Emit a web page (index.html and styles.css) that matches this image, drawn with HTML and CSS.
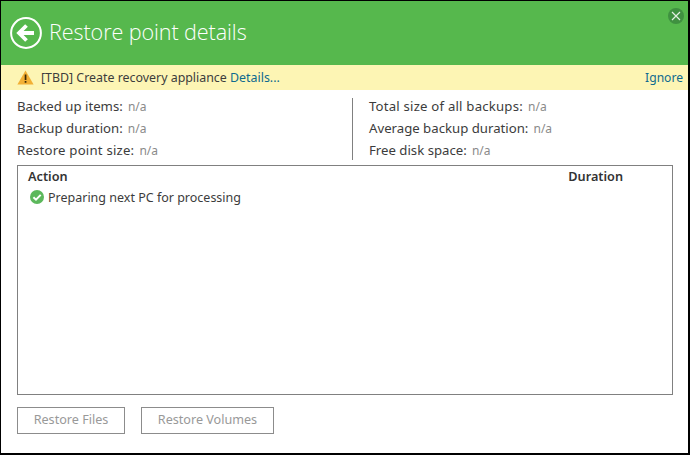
FILE: index.html
```html
<!DOCTYPE html>
<html lang="en">
<head>
<meta charset="utf-8">
<title>Restore point details</title>
<link rel="stylesheet" href="styles.css">
</head>
<body>
<div class="window">
  <header class="header">
    <svg class="back" width="32" height="32" viewBox="0 0 32 32" aria-hidden="true">
      <circle cx="16" cy="16" r="14.9" fill="none" stroke="#fff" stroke-width="2"/>
      <path d="M16.5 8.5 9 16l7.5 7.5M9.5 16h14.5" fill="none" stroke="#fff" stroke-width="3.8"/>
    </svg>
    <h1 class="title">Restore point details</h1>
    <span class="close">
      <svg width="10" height="10" viewBox="0 0 10 10" aria-hidden="true"><path d="M1 1l8 8M9 1l-8 8" stroke="#fff" stroke-width="1.2" opacity=".85"/></svg>
    </span>
  </header>
  <div class="notice">
    <svg class="warn" width="17" height="15" viewBox="0 0 17 15" aria-hidden="true">
      <path d="M8.5 .5 16.6 14.5H.4Z" fill="#f2b035"/>
      <path d="M7.7 4.5h1.7v5.5H7.7zM7.7 11h1.7v1.8H7.7z" fill="#3a2a05"/>
    </svg>
    <span class="notice-text">[TBD] Create recovery appliance <a class="link">Details...</a></span>
    <a class="link ignore">Ignore</a>
  </div>
  <section class="stats">
    <div class="stat-col">
      <div class="stat"><span class="label">Backed up items:</span> <span class="value">n/a</span></div>
      <div class="stat"><span class="label">Backup duration:</span> <span class="value">n/a</span></div>
      <div class="stat"><span class="label loose">Restore point size:</span> <span class="value">n/a</span></div>
    </div>
    <div class="stat-col second">
      <div class="stat"><span class="label loose">Total size of all backups:</span> <span class="value">n/a</span></div>
      <div class="stat"><span class="label">Average backup duration:</span> <span class="value">n/a</span></div>
      <div class="stat"><span class="label">Free disk space:</span> <span class="value">n/a</span></div>
    </div>
  </section>
  <section class="table">
    <div class="thead"><span>Action</span><span class="dur">Duration</span></div>
    <div class="row">
      <svg width="14" height="14" viewBox="0 0 14 14" aria-hidden="true">
        <circle cx="7" cy="7" r="7" fill="#5cb85c"/>
        <path d="M3.4 7.2 6 9.7l4.7-4.8" fill="none" stroke="#fff" stroke-width="2"/>
      </svg>
      <span>Preparing next PC for processing</span>
    </div>
  </section>
  <footer class="actions">
    <button class="btn files">Restore Files</button>
    <button class="btn volumes">Restore Volumes</button>
  </footer>
</div>
</body>
</html>
```
FILE: styles.css
```css
* { box-sizing: border-box; }
html, body { margin: 0; height: 100%; }
body { background: #fff; }
.window {
  width: 690px; height: 455px;
  border: 1px solid #000; border-right-width: 2px; border-bottom-width: 2px; border-top-width: 1px;
  display: flex; flex-direction: column;
  font-family: "Noto Sans", sans-serif; font-size: 12px; color: #3c3c3c;
  background: #fff;
}
.header {
  height: 64px; background: #56b84d;
  display: flex; align-items: center;
  padding-left: 9px; position: relative;
}
.back { flex: none; margin-top: -1px; }
.title { margin: 0 0 3px 7px; font: 300 21.6px "Open Sans", sans-serif; color: #fff; letter-spacing: -.1px; }
.close {
  position: absolute; right: 4px; top: 7px;
  width: 16px; height: 16px; border-radius: 50%; background: #3f9140;
  display: flex; align-items: center; justify-content: center;
}
.notice {
  height: 25px; background: #fdf5b4;
  display: flex; align-items: center;
  padding: 0 5px 1px 16px;
}
.warn { flex: none; margin-right: 7px; }
.notice-text { flex: 1; font-size: 12.4px; }
.link { color: #0e6a8f; }
.ignore { font-size: 12.1px; }
.stats { display: flex; height: 75px; padding: 8px 0 0 16px; }
.stat-col { width: 335px; height: 62px; }
.stat-col.second { border-left: 1px solid #808080; padding-left: 16px; width: 300px; }
.stat { height: 22px; line-height: 17px; white-space: nowrap; }
.label { color: #3c3c3c; font-size: 13.2px; }
.loose { letter-spacing: .2px; }
.value { color: #8a8a8a; margin-left: 2px; }
.table {
  margin-left: 16px; width: 656px; height: 230px;
  border: 1px solid #808080;
  padding: 2px 0 0 10px;
}
.thead { display: flex; font-weight: 600; font-size: 12.7px; color: #333; height: 19px; line-height: 17px; }
.dur { margin-left: auto; margin-right: 49px; }
.row { display: flex; align-items: center; gap: 4px; height: 20px; padding-left: 2px; font-size: 12.5px; }
.actions { display: flex; gap: 16px; margin: 12px 0 0 16px; }
.btn {
  height: 27px; padding: 0 0 2px; background: #fff;
  border: 1px solid #8c8c8c; color: #999;
  font: 12.6px "Noto Sans", sans-serif;
}
.files { width: 108px; }
.volumes { width: 133px; }
```
